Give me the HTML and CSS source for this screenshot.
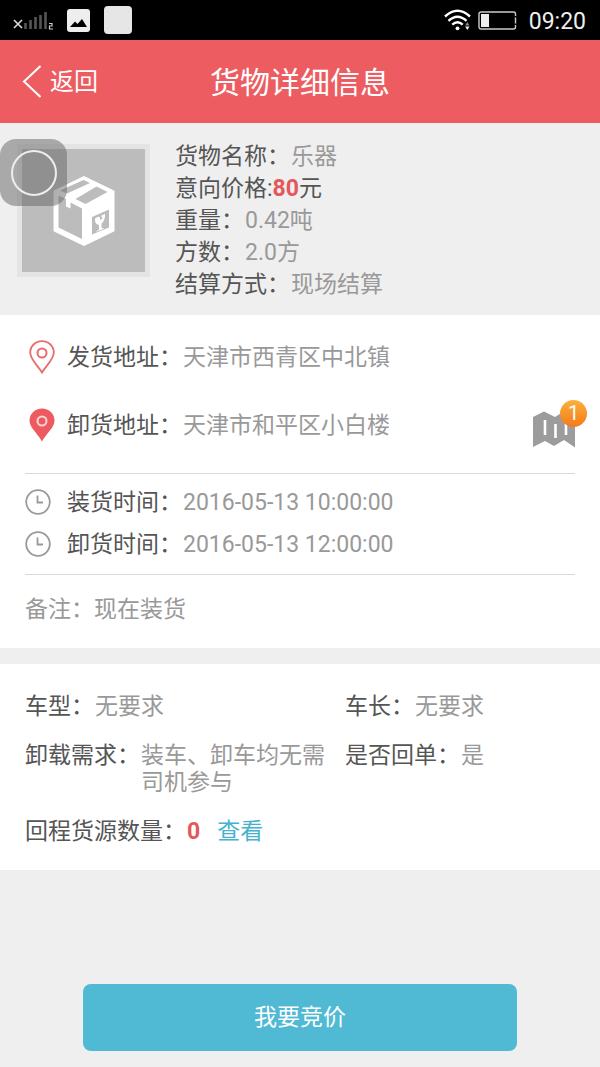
FILE: index.html
```html
<!DOCTYPE html>
<html lang="zh-CN">
<head>
<meta charset="utf-8">
<meta name="viewport" content="width=device-width, initial-scale=1">
<title>货物详细信息</title>
<link rel="stylesheet" href="styles.css">
</head>
<body>
<div class="status">
  <svg class="status-signal" width="42" height="22" viewBox="0 0 42 22" aria-hidden="true">
    <path d="M1 11l8 8M9 11l-8 8" stroke="#ddd" stroke-width="1.6" fill="none"/>
    <path d="M12.500 14v6M17.500 11v9M22.500 8v12M27.500 6v14M32.500 3v17" stroke="#555" stroke-width="2.600"/>
    <path d="M36 14.500h3v2.500h-2.500v3h3.500" stroke="#ccc" stroke-width="1.200" fill="none"/>
  </svg>
  <svg class="status-picture" width="23" height="23" viewBox="0 0 23 23" aria-hidden="true">
    <rect width="23" height="23" rx="3" fill="#eee"/>
    <path d="M3 18l5-5.500 2.500 2.500 4.500-5 5 8z" fill="#000"/>
  </svg>
  <span class="status-app"></span>
  <svg class="status-wifi" width="27" height="22" viewBox="0 0 27 22" aria-hidden="true">
    <g fill="none" stroke="#fff" stroke-width="2.400">
      <path d="M1 7.500Q13.500-4 26 7.500"/>
      <path d="M4.500 11.800Q13.500 3.500 22.500 11.800"/>
      <path d="M8.300 15.600Q13.500 11 18.700 15.600"/>
    </g>
    <circle cx="13.500" cy="19.300" r="1.900" fill="#fff"/>
    <path d="M23.300 13l2.200 3.500h-4.400z" fill="#888"/>
    <path d="M23.300 21l2.200-3.500h-4.400z" fill="#eee"/>
  </svg>
  <svg class="status-battery" width="39" height="19" viewBox="0 0 39 19" aria-hidden="true">
    <rect x="1" y="1" width="36.500" height="17" rx="2" fill="none" stroke="#ccc" stroke-width="1.400"/>
    <path d="M37.500 5v1.500M37.500 12.500v1.500" stroke="#000" stroke-width="2"/>
    <rect x="3" y="3" width="8" height="13" fill="#eee"/>
  </svg>
  <time class="status-time">09:20</time>
</div>

<header class="header">
  <button class="back" type="button">
    <svg width="19" height="33" viewBox="0 0 19 33" aria-hidden="true"><path d="M18.500 1L2 16.500l16.500 15.500" fill="none" stroke="#fff" stroke-width="2"/></svg>
    <span class="back-label">返回</span>
  </button>
  <h1 class="title">货物详细信息</h1>
</header>

<main>
  <section class="summary">
    <div class="thumb">
      <svg width="63" height="70" viewBox="-2 0 63 70" aria-hidden="true">
        <path d="M30 .5L60 15v40L30 69.500 0 55V15z" fill="#fff" stroke="#fff" stroke-linejoin="round"/>
        <path d="M29.500 4L36 7 13 17.500 6 14.500z" fill="#bcbcbc"/>
        <path d="M42.500 10.500L53.500 16 31.500 28 21.500 23z" fill="#bcbcbc"/>
        <path d="M4.500 19.500L12 23v7.500l4.500 2V26.500l11.500 6V63L4.500 51.500z" fill="#bcbcbc"/>
        <path d="M38 41l17-7.500V51.500L38 58.500z" fill="#bcbcbc"/>
        <path d="M41 42.500q-.5 5.500 4 6.500v4.500l-3.500 2.500 9-3.500-3-.5v-4.500q4-3.500 3.500-9.500l-4 1.800 1.500 2.700-2.500 1.500 0-2.500-1.500-1z" fill="#fff"/>
      </svg>
      <button class="assist" type="button" aria-label="悬浮按钮"><span class="assist-ring"></span></button>
    </div>
    <dl class="facts">
      <div class="field"><dt>货物名称：</dt><dd>乐器</dd></div>
      <div class="price"><dt>意向价格:</dt><dd><strong class="red">80</strong>元</dd></div>
      <div class="field"><dt>重量：</dt><dd>0.42吨</dd></div>
      <div class="field"><dt>方数：</dt><dd>2.0方</dd></div>
      <div class="field"><dt>结算方式：</dt><dd>现场结算</dd></div>
    </dl>
  </section>

  <section class="card trip">
    <div class="places">
      <dl class="place-list">
        <div class="field place">
          <svg class="pin" width="26" height="34" viewBox="0 0 26 34" aria-hidden="true"><path d="M13 1.200C6.300 1.200 1.200 6.200 1.200 12.600 1.200 19.500 8.500 25 13 32.500 17.500 25 24.800 19.500 24.800 12.600 24.800 6.200 19.700 1.200 13 1.200z" fill="#fff" stroke="#ea6b6d" stroke-width="1.800"/><circle cx="13" cy="13" r="4.500" fill="none" stroke="#ea6b6d" stroke-width="2"/></svg>
          <dt>发货地址：</dt><dd>天津市西青区中北镇</dd>
        </div>
        <div class="field place">
          <svg class="pin" width="26" height="34" viewBox="0 0 26 34" aria-hidden="true"><path d="M13 .5C6 .5.500 5.800.500 12.600.500 19.500 8 25 13 33.500 18 25 25.500 19.500 25.500 12.600 25.500 5.800 20 .5 13 .5z" fill="#ed5b60"/><circle cx="13" cy="13" r="4.500" fill="none" stroke="#f9d5d6" stroke-width="2"/></svg>
          <dt>卸货地址：</dt><dd>天津市和平区小白楼</dd>
        </div>
      </dl>
      <button class="map" type="button" aria-label="地图">
        <svg width="42" height="40" viewBox="0 0 42 40" aria-hidden="true"><path d="M0 8L11 2.500 22 8 33 1 42 5v33.500l-11-7.500-10 6-9-5L0 38z" fill="#9c9c9c"/><path d="M12 11v15M22.500 15v14M33 11v15" stroke="#fff" stroke-width="2.600"/></svg>
        <span class="badge">1</span>
      </button>
    </div>
    <dl class="times">
      <div class="field time">
        <svg width="26" height="26" viewBox="0 0 26 26" aria-hidden="true"><circle cx="13" cy="13" r="11.800" fill="none" stroke="#999" stroke-width="1.800"/><path d="M12.500 6.500v7h5.500" fill="none" stroke="#999" stroke-width="1.800"/></svg>
        <dt>装货时间：</dt><dd>2016-05-13 10:00:00</dd>
      </div>
      <div class="field time">
        <svg width="26" height="26" viewBox="0 0 26 26" aria-hidden="true"><circle cx="13" cy="13" r="11.800" fill="none" stroke="#999" stroke-width="1.800"/><path d="M12.500 6.500v7h5.500" fill="none" stroke="#999" stroke-width="1.800"/></svg>
        <dt>卸货时间：</dt><dd>2016-05-13 12:00:00</dd>
      </div>
    </dl>
    <p class="remark">备注：现在装货</p>
  </section>

  <section class="card needs">
    <dl class="needs-grid">
      <div class="field"><dt>车型：</dt><dd>无要求</dd></div>
      <div class="field"><dt>车长：</dt><dd>无要求</dd></div>
      <div class="field"><dt>卸载需求：</dt><dd>装车、卸车均无需司机参与</dd></div>
      <div class="field"><dt>是否回单：</dt><dd>是</dd></div>
      <div class="field"><dt>回程货源数量：</dt><dd><strong class="red">0</strong><a class="view" href="#">查看</a></dd></div>
    </dl>
  </section>

  <div class="actions"><button class="bid" type="button">我要竞价</button></div>
</main>
</body>
</html>
```

FILE: styles.css
```css
* { box-sizing: border-box; }

body {
  margin: 0;
  background: #efefef;
  color: #555;
  font: 23px/27px Roboto, "Noto Sans CJK SC", sans-serif;
}

h1, dl, dd, p { margin: 0; }

button {
  padding: 0;
  border: 0;
  background: none;
  color: inherit;
  font: inherit;
  cursor: pointer;
}

svg { display: block; flex: none; }

.status {
  display: flex;
  align-items: center;
  height: 40px;
  padding: 0 14px 0 13px;
  background: #000;
  color: #eee;
}
.status-picture { margin: 0 14px 0 12px; }
.status-app {
  width: 28px;
  height: 28px;
  border-radius: 4px;
  background: #e6e6e6;
}
.status-wifi { margin-left: auto; }
.status-battery { margin: 0 12px 0 7px; }
.status-time { padding-top: 2px; }

.header {
  display: grid;
  grid-template-columns: 1fr auto 1fr;
  align-items: center;
  height: 83px;
  padding: 0 22px;
  background: #ed5c60;
  color: #fff;
}
.back {
  display: flex;
  align-items: center;
  justify-self: start;
  gap: 9px;
  font-size: 24px;
}
.back-label { padding-top: 2px; }
.title { padding-top: 2px; font-size: 30px; font-weight: 400; line-height: 40px; }

.summary {
  display: flex;
  gap: 25px;
  padding: 18px 17px 14px;
}
.thumb {
  position: relative;
  display: grid;
  place-items: center;
  width: 133px;
  height: 133px;
  margin-top: 3px;
  border: 5px solid #e4e4e4;
  background: #bcbcbc;
}
.assist {
  position: absolute;
  top: -10px;
  left: -22px;
  display: grid;
  place-items: center;
  width: 67px;
  height: 67px;
  border-radius: 16px;
  background: rgba(100, 100, 100, .5);
}
.assist-ring {
  width: 46px;
  height: 46px;
  border: 2px solid #eee;
  border-radius: 50%;
}
.facts { line-height: 32px; }

.field { display: flex; }
.field dt { flex: none; margin-right: 1px; }
.field dd { color: #999; }
.price { display: flex; }
.red { color: #e4575b; font-weight: 700; }

.card { background: #fff; }
.trip { padding: 8px 25px 6px; }
.places {
  display: flex;
  align-items: flex-end;
  justify-content: space-between;
  padding-bottom: 14px;
  border-bottom: 1px solid #d9d9d9;
}
.place { align-items: center; height: 68px; }
.pin { margin: 0 12px 0 4px; }
.map { position: relative; margin-bottom: 10px; }
.badge {
  position: absolute;
  top: -9px;
  right: -12px;
  width: 27px;
  height: 27px;
  border-radius: 50%;
  background: linear-gradient(#fbb03a, #f47a1c);
  color: #fff;
  font-size: 20px;
}
.times { padding: 7px 0 9px; border-bottom: 1px solid #d9d9d9; }
.time { align-items: center; height: 42px; }
.time svg { margin-right: 16px; }
.remark { padding: 21px 0 19px; color: #999; }

.needs { margin-top: 16px; padding: 29px 25px 25px; }
.needs-grid {
  display: grid;
  grid-template-columns: 310fr 230fr;
  gap: 22px 10px;
}
.view { margin-left: 17px; color: #45b3cd; text-decoration: none; }

.actions { padding: 114px 83px 17px; }
.bid {
  width: 100%;
  padding: 20px;
  border-radius: 8px;
  background: #50b9d3;
  color: #fff;
}
```
